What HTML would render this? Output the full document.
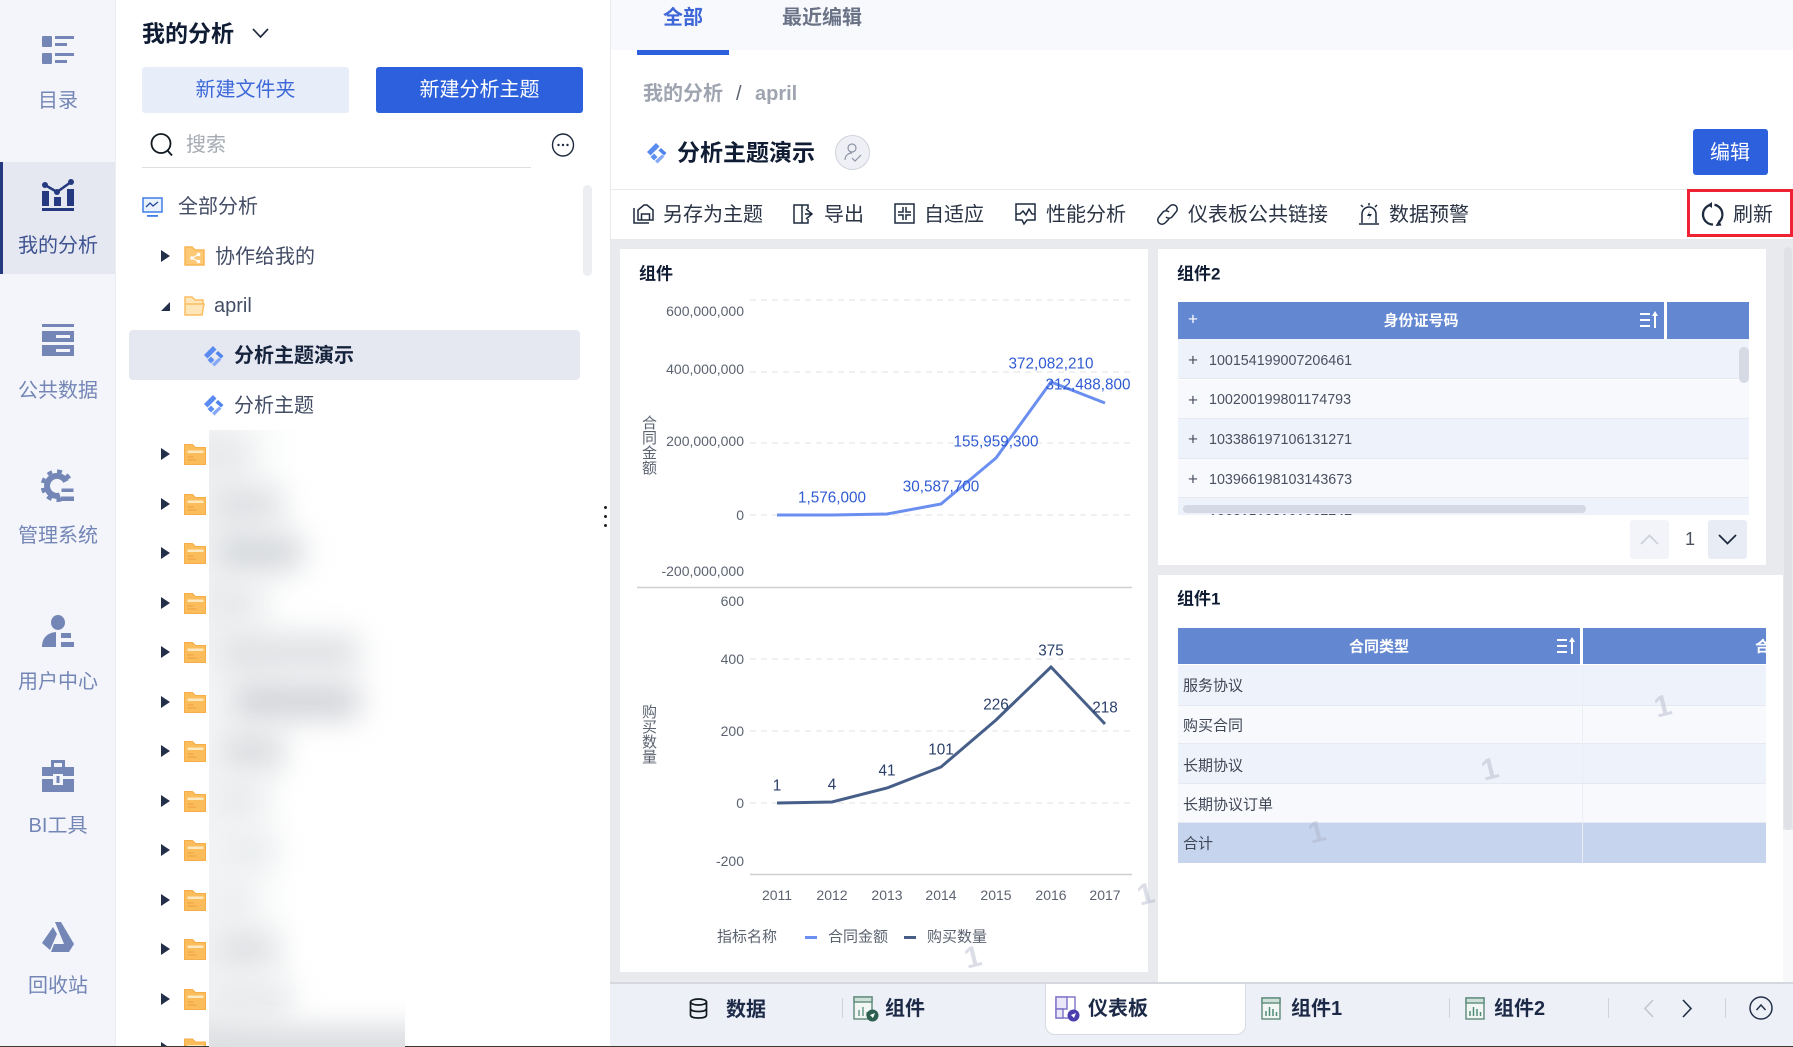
<!DOCTYPE html>
<html lang="zh-CN"><head><meta charset="utf-8"><title>我的分析</title>
<style>
*{box-sizing:border-box}
html,body{margin:0;padding:0;width:1793px;height:1047px;overflow:hidden;background:#fff}
body{position:relative;font-family:"Liberation Sans","Noto Sans CJK SC",sans-serif;color:#3a4560}
.a{position:absolute}
.t,.c,.r{position:absolute;white-space:nowrap;line-height:1}
.t{transform:translateY(calc(-50% + 1px))}
.c{transform:translate(-50%,calc(-50% + 1px))}
.r{transform:translate(-100%,-50%)}
.nav{font-size:20px;color:#7486b6;transform:translate(-50%,calc(-50% + 2px))}
.tree{font-size:20px;color:#434d66}
.tool{font-size:20px;color:#2a3344}
.ax{font-size:14px;color:#5c6370}
.c.ax,.c.b1,.c.b2{transform:translate(-50%,-50%)}
.t.cell{transform:translateY(-50%)}
.b1{font-size:15.3px;color:#2f5bd3}
.b2{font-size:15.3px;color:#2a3f6b}
.cell{font-size:14.3px;color:#4a5060}
.cn{font-size:15px;color:#3f4656}
.h{font-size:15px;font-weight:700;color:#fff}
.ttl{font-size:17px;font-weight:700;color:#0f1c33}
.bt{font-size:20px;font-weight:700;color:#1c2a48}
.wm{position:absolute;font-size:30px;font-weight:700;color:rgba(170,176,195,.42);transform:translate(-50%,-50%) rotate(-14deg);line-height:1}
.vert{position:absolute;writing-mode:vertical-rl;text-orientation:upright;font-size:15px;line-height:1;color:#5c6370;letter-spacing:0}
.bl{position:absolute;height:34px;filter:blur(15px)}
svg{position:absolute;overflow:visible}
</style></head><body>
<svg width="0" height="0"><defs>
<g id="fo"><path d="M0 0h8l3 3h10v17H0z" fill="#fbbd5c" stroke="#f6ae48"/><rect x="3" y="6" width="16" height="2.500" fill="#fee9bf"/><rect x="3" y="12" width="6" height="1" fill="#ec9f3a"/><rect x="3" y="15" width="9" height="1" fill="#ec9f3a"/></g>
<path id="ar" d="M0 0l9 6-9 6z" fill="#24304a"/>
<g id="dm"><path d="M1 10L10 1l3.500 3.500-9 9z" fill="#5a8bf0"/><path d="M15 6l5.500 5-2.500 2.500-5.500-5z" fill="#4f83ee"/><path d="M4.500 15L8 11.500l3.500 3.500L8 18.500z" fill="#5f90f1"/><path d="M11.500 21.500L9 19l7-6.500 2.500 2z" fill="#85a9f6"/></g>
</defs></svg>

<!-- Sidebar -->
<div class="a" style="left:0;top:0;width:116px;height:1047px;background:#f3f5fa;border-right:1px solid #eceef3"></div>
<div class="a" style="left:0;top:162px;width:115px;height:112px;background:#e5e8f1"></div>
<div class="a" style="left:0;top:162px;width:3px;height:112px;background:#24397f"></div>

<svg style="left:42px;top:36px" width="32" height="28" viewBox="0 0 32 28" fill="#7486b6"><rect x="0" y="0" width="10" height="11" rx="1"/><rect x="13" y="0" width="19" height="3"/><rect x="13" y="7" width="12" height="3"/><rect x="0" y="17" width="10" height="11" rx="1"/><rect x="13" y="17" width="19" height="3"/><rect x="13" y="24" width="12" height="3"/></svg>
<div class="c nav" style="left:58px;top:99px">目录</div>

<svg style="left:42px;top:179px" width="32" height="32" viewBox="0 0 32 32" fill="#24397f"><path d="M3 6l12 7L29 3" fill="none" stroke="#24397f" stroke-width="2.600"/><circle cx="3" cy="6" r="3"/><circle cx="15" cy="13" r="3"/><circle cx="29" cy="3" r="3"/><rect x="0" y="12" width="7" height="15"/><rect x="12" y="18" width="7" height="9"/><rect x="25" y="10" width="7" height="17"/><rect x="0" y="29" width="32" height="3"/></svg>
<div class="c nav" style="left:58px;top:244px;color:#3d5290">我的分析</div>

<svg style="left:42px;top:324px" width="32" height="32" viewBox="0 0 32 32" fill="#7486b6"><rect x="0" y="0" width="32" height="3"/><path d="M0 7h32v11H0zM14 11v3h14v-3z" fill-rule="evenodd"/><path d="M0 21h32v11H0zM14 25v3h14v-3z" fill-rule="evenodd"/></svg>
<div class="c nav" style="left:58px;top:389px">公共数据</div>

<svg style="left:42px;top:470px" width="32" height="32" viewBox="0 0 32 32" fill="none" stroke="#7486b6"><path d="M24 11.500A10 10 0 1 0 18 25.500" stroke-width="6"/><path d="M27.500 8.500A14.500 14.500 0 1 0 19.500 29.500" stroke-width="3.500" stroke-dasharray="5 5"/><rect x="19.500" y="18.500" width="12" height="3.500" fill="#7486b6" stroke="none"/><rect x="19" y="26.500" width="13" height="4.500" fill="#7486b6" stroke="none"/></svg>
<div class="c nav" style="left:58px;top:534px">管理系统</div>

<svg style="left:42px;top:615px" width="32" height="32" viewBox="0 0 32 32" fill="#7486b6"><ellipse cx="16" cy="7.500" rx="7" ry="7.500"/><path d="M0 32c0-8 4-14 14-15v15z"/><rect x="19" y="18" width="10" height="5"/><rect x="19" y="27" width="13" height="5"/></svg>
<div class="c nav" style="left:58px;top:680px">用户中心</div>

<svg style="left:42px;top:760px" width="32" height="32" viewBox="0 0 32 32" fill="#7486b6"><path d="M9 7V0h14v7h-3V3h-8v4z"/><rect x="0" y="7" width="32" height="9"/><rect x="0" y="19" width="32" height="13"/><rect x="11" y="14" width="10" height="11" fill="#f3f5fa"/><rect x="14.500" y="16" width="3" height="7"/></svg>
<div class="c nav" style="left:58px;top:824px">BI工具</div>

<svg style="left:42px;top:922px" width="32" height="30" viewBox="0 0 32 30" fill="#7486b6"><path d="M13 0h6l13 22H22z"/><path d="M11 5l4 7L8 28 0 21z"/><path d="M12 22h20l-5 8H9z"/></svg>
<div class="c nav" style="left:58px;top:984px">回收站</div>

<!-- Panel -->
<div class="t" style="left:142px;top:33px;font-size:23px;font-weight:700;color:#0f1c33">我的分析</div>
<svg style="left:252px;top:28px" width="17" height="11" viewBox="0 0 17 11"><path d="M1 1l7.500 8L16 1" fill="none" stroke="#222c40" stroke-width="1.700"/></svg>
<div class="a" style="left:142px;top:67px;width:207px;height:46px;background:#e8eef9;border-radius:3px"></div>
<div class="c" style="left:245.500px;top:89px;font-size:20px;color:#3e68d8">新建文件夹</div>
<div class="a" style="left:376px;top:67px;width:207px;height:46px;background:#2d60dc;border-radius:3px"></div>
<div class="c" style="left:479.500px;top:89px;font-size:20px;color:#fff">新建分析主题</div>

<svg style="left:150px;top:133px" width="24" height="24" viewBox="0 0 24 24" fill="none" stroke="#101820" stroke-width="1.800"><circle cx="11" cy="10.500" r="9.500"/><path d="M17.500 17.500l4.500 5"/></svg>
<div class="t" style="left:186px;top:144px;font-size:20px;color:#a6abb3">搜索</div>
<div class="a" style="left:142px;top:167px;width:389px;height:1px;background:#dcdee2"></div>
<svg style="left:551px;top:133px" width="24" height="24" viewBox="0 0 24 24"><ellipse cx="12" cy="12" rx="10.500" ry="11" fill="none" stroke="#1d2a3f" stroke-width="1.400"/><circle cx="7.500" cy="12" r="1.200" fill="#1d2a3f"/><circle cx="12" cy="12" r="1.200" fill="#1d2a3f"/><circle cx="16.500" cy="12" r="1.200" fill="#1d2a3f"/></svg>
<div class="a" style="left:583px;top:185px;width:9px;height:91px;background:#eceef2;border-radius:5px"></div>

<svg style="left:142px;top:197px" width="21" height="21" viewBox="0 0 21 21"><rect x="1" y="1" width="19" height="14" fill="#e9f1fd" stroke="#3f7ee8" stroke-width="1.500"/><path d="M4 10l4-4 3 3 5-4" fill="none" stroke="#26489a" stroke-width="1.300"/><rect x="5" y="18" width="11" height="1.800" fill="#3f7ee8"/></svg>
<div class="t tree" style="left:178px;top:206px">全部分析</div>

<svg style="left:161px;top:250px" width="9" height="12" viewBox="0 0 9 12"><path d="M0 0l9 6-9 6z" fill="#24304a"/></svg>
<svg style="left:184px;top:246px" width="21" height="20" viewBox="0 0 21 20"><path d="M1 1h7l3 3h9v15H1z" fill="#fcc976" stroke="#f9b654" stroke-width="1.500"/><circle cx="8" cy="12" r="1.800" fill="#fff"/><circle cx="14.500" cy="8.500" r="1.800" fill="#fff"/><circle cx="14.500" cy="15.500" r="1.800" fill="#fff"/><path d="M8 12l6.500-3.500M8 12l6.500 3.500" stroke="#fff"/></svg>
<div class="t tree" style="left:215px;top:256px">协作给我的</div>

<svg style="left:161px;top:302px" width="9" height="9" viewBox="0 0 9 9"><path d="M9 0v9H0z" fill="#24304a"/></svg>
<svg style="left:184px;top:296px" width="21" height="20" viewBox="0 0 21 20"><path d="M1 1h7l3 3h8v4H1zM1 8v11h17l2-11z" fill="#fee6b8" stroke="#fbbe62" stroke-width="1.500"/></svg>
<div class="t tree" style="left:214px;top:305px;font-size:20px">april</div>

<div class="a" style="left:129px;top:330px;width:451px;height:50px;background:#e5e8f1;border-radius:4px"></div>
<svg style="left:203px;top:345px" width="22" height="22" viewBox="0 0 22 22"><use href="#dm"/></svg>
<div class="t" style="left:234px;top:355px;font-size:20px;font-weight:700;color:#16233d">分析主题演示</div>
<svg style="left:203px;top:394px" width="22" height="22" viewBox="0 0 22 22"><use href="#dm"/></svg>
<div class="t tree" style="left:234px;top:405px">分析主题</div>

<!-- folder rows -->
<svg style="left:0;top:0" width="210" height="1047" viewBox="0 0 210 1047">
<use href="#ar" x="161" y="448"/><use href="#fo" x="184.500" y="444.500"/>
<use href="#ar" x="161" y="498"/><use href="#fo" x="184.500" y="494.500"/>
<use href="#ar" x="161" y="547"/><use href="#fo" x="184.500" y="543.500"/>
<use href="#ar" x="161" y="597"/><use href="#fo" x="184.500" y="593.500"/>
<use href="#ar" x="161" y="646"/><use href="#fo" x="184.500" y="642.500"/>
<use href="#ar" x="161" y="696"/><use href="#fo" x="184.500" y="692.500"/>
<use href="#ar" x="161" y="745"/><use href="#fo" x="184.500" y="741.500"/>
<use href="#ar" x="161" y="795"/><use href="#fo" x="184.500" y="791.500"/>
<use href="#ar" x="161" y="844"/><use href="#fo" x="184.500" y="840.500"/>
<use href="#ar" x="161" y="894"/><use href="#fo" x="184.500" y="890.500"/>
<use href="#ar" x="161" y="943"/><use href="#fo" x="184.500" y="939.500"/>
<use href="#ar" x="161" y="993"/><use href="#fo" x="184.500" y="989.500"/>
<use href="#ar" x="161" y="1042"/><use href="#fo" x="184.500" y="1039"/>
</svg>

<!-- blurred names -->
<div class="a" style="left:209px;top:430px;width:220px;height:617px;overflow:hidden;background:linear-gradient(90deg,#f4f5f6 0,#fafbfb 22%,#fff 42%)">
 <div class="bl" style="left:-10px;top:7px;width:50px;background:#e4e6e8"></div>
 <div class="bl" style="left:2px;top:57px;width:70px;background:#dcdee1"></div>
 <div class="bl" style="left:8px;top:105px;width:85px;background:#d2d5d9"></div>
 <div class="bl" style="left:-5px;top:155px;width:55px;background:#e4e6e8"></div>
 <div class="bl" style="left:10px;top:205px;width:140px;background:#dddfe2"></div>
 <div class="bl" style="left:25px;top:254px;width:125px;background:#cfd1d6"></div>
 <div class="bl" style="left:14px;top:304px;width:60px;background:#d8dadd"></div>
 <div class="bl" style="left:8px;top:353px;width:45px;background:#e6e8ea"></div>
 <div class="bl" style="left:14px;top:403px;width:50px;background:#e8eaec"></div>
 <div class="bl" style="left:8px;top:453px;width:35px;background:#e9ebed"></div>
 <div class="bl" style="left:8px;top:502px;width:60px;background:#dcdee1"></div>
 <div class="bl" style="left:3px;top:551px;width:80px;background:#e6e8ea"></div>
</div>
<div class="a" style="left:209px;top:985px;width:196px;height:62px;overflow:hidden">
 <div class="a" style="left:-30px;top:40px;width:260px;height:45px;background:#dcdee1;filter:blur(13px)"></div>
</div>

<div class="a" style="left:604px;top:506px;width:3px;height:3px;background:#222;border-radius:50%"></div>
<div class="a" style="left:604px;top:515px;width:3px;height:3px;background:#222;border-radius:50%"></div>
<div class="a" style="left:604px;top:524px;width:3px;height:3px;background:#222;border-radius:50%"></div>

<!-- Content header -->
<div class="a" style="left:610px;top:0;width:1183px;height:50px;background:#f8f9fd"></div>
<div class="a" style="left:610px;top:0;width:1px;height:240px;background:#e8eaee"></div>
<div class="a" style="left:637px;top:50px;width:92px;height:5px;background:#2d60dc"></div>
<div class="t" style="left:663px;top:17px;font-size:20px;font-weight:700;color:#3e68d8">全部</div>
<div class="t" style="left:782px;top:17px;font-size:20px;font-weight:700;color:#6a7386">最近编辑</div>
<div class="t" style="left:643px;top:93px;font-size:20px;font-weight:700;color:#9fa5b0">我的分析</div>
<div class="t" style="left:736px;top:93px;font-size:20px;color:#5c6470">/</div>
<div class="t" style="left:755px;top:93px;font-size:20px;font-weight:700;color:#9fa5b0">april</div>

<svg style="left:646px;top:142px" width="22" height="22" viewBox="0 0 22 22"><use href="#dm"/></svg>
<div class="t" style="left:677px;top:152px;font-size:23px;font-weight:700;color:#0f1c33">分析主题演示</div>
<svg style="left:835px;top:135px" width="35" height="35" viewBox="0 0 35 35"><circle cx="17.500" cy="17.500" r="17" fill="#eef0f5" stroke="#cfd3da"/><circle cx="17" cy="13" r="4" fill="none" stroke="#8d94a3" stroke-width="1.200"/><path d="M10 25c0-4 3-7 7-7M17 23l3 3 6-6" fill="none" stroke="#8d94a3" stroke-width="1.200"/></svg>

<div class="a" style="left:1693px;top:129px;width:75px;height:46px;background:#2d60dc;border-radius:3px"></div>
<div class="c" style="left:1730px;top:152px;font-size:20px;color:#fff">编辑</div>

<div class="a" style="left:610px;top:189px;width:1183px;height:1px;background:#e8eaee"></div>

<!-- Toolbar -->
<svg style="left:633px;top:203px" width="21" height="21" viewBox="0 0 21 21" fill="none" stroke="#1d2a3f" stroke-width="1.500"><path d="M1 5v15h15M5 17V7l6-5h3l6 5v10z"/><path d="M8.500 17v-6h8v6"/></svg>
<div class="t tool" style="left:663px;top:214px">另存为主题</div>
<svg style="left:793px;top:203px" width="21" height="21" viewBox="0 0 21 21" fill="none" stroke="#1d2a3f" stroke-width="1.500"><path d="M15 6V2H1v18h14v-4M9 2v18"/><path d="M13 6l6 5-6 5M12 11h7"/></svg>
<div class="t tool" style="left:824px;top:214px">导出</div>
<svg style="left:894px;top:203px" width="21" height="21" viewBox="0 0 21 21" fill="none" stroke="#1d2a3f" stroke-width="1.500"><rect x="1" y="1" width="19" height="19"/><path d="M9 4v5H4M12 4v5h5M9 17v-5H4M12 17v-5h5"/></svg>
<div class="t tool" style="left:924px;top:214px">自适应</div>
<svg style="left:1015px;top:203px" width="21" height="22" viewBox="0 0 21 22" fill="none" stroke="#1d2a3f" stroke-width="1.500"><path d="M1 1h19v16h-8l-3 4-2-4H1z"/><path d="M1 11h4l3-3 3 4 3-6 3 5h3"/></svg>
<div class="t tool" style="left:1046px;top:214px">性能分析</div>
<svg style="left:1157px;top:203px" width="21" height="22" viewBox="0 0 21 22" fill="none" stroke="#1d2a3f" stroke-width="1.500"><path d="M9 7l4-4a4.200 4.200 0 0 1 6 6l-4 5a4.200 4.200 0 0 1-6 0"/><path d="M12 9a4.200 4.200 0 0 0-6 0l-4 5a4.200 4.200 0 0 0 6 6l4-4"/></svg>
<div class="t tool" style="left:1188px;top:214px">仪表板公共链接</div>
<svg style="left:1359px;top:203px" width="20" height="22" viewBox="0 0 20 22" fill="none" stroke="#1d2a3f" stroke-width="1.500"><path d="M3 20V11a7 7 0 0 1 14 0v9M0 21h20M10 0v2.500M2 2l2 2M18 2l-2 2"/><path d="M11 8l-3 5h3l-2 4 4-6h-3z" fill="#1d2a3f" stroke="none"/></svg>
<div class="t tool" style="left:1389px;top:214px">数据预警</div>
<svg style="left:1701px;top:203px" width="23" height="23" viewBox="0 0 23 23" fill="none" stroke="#1d2a3f" stroke-width="2.300"><path d="M10 1.700A10 10 0 0 0 12 21.500"/><path d="M13.500 1.700A10 10 0 0 1 18 19"/><path d="M11 -1L6.500 2 11 5z" fill="#1d2a3f" stroke="none"/><path d="M14.500 23l6-0.500-2.500-5.500z" fill="#1d2a3f" stroke="none"/></svg>
<div class="t tool" style="left:1733px;top:214px">刷新</div>
<div class="a" style="left:1687px;top:189px;width:106px;height:48px;border:3px solid #ee2233"></div>

<!-- Gray work area -->
<div class="a" style="left:610px;top:239px;width:1183px;height:744px;background:#e8eaee"></div>
<div class="a" style="left:620px;top:249px;width:528px;height:723px;background:#fff"></div>
<div class="a" style="left:1158px;top:249px;width:608px;height:316px;background:#fff"></div>
<div class="a" style="left:1158px;top:575px;width:625px;height:408px;background:#fff"></div>
<div class="a" style="left:1783px;top:830px;width:10px;height:153px;background:#f8f8fa"></div>
<div class="a" style="left:1784px;top:247px;width:8px;height:583px;background:#dfe1e6;border-radius:4px"></div>

<!-- Chart svg lines -->
<svg style="left:0;top:0" width="1793" height="1047" viewBox="0 0 1793 1047" fill="none">
 <g stroke="#e8e8e8" stroke-width="1.200" stroke-dasharray="6 5">
  <path d="M750 300H1132M750 372H1132M750 443H1132M750 515H1132M750 659H1132M750 731H1132M750 803H1132"/>
 </g>
 <path d="M637 587.500H1132M750 874.500H1132" stroke="#cfcfcf" stroke-width="1.500"/>
 <path d="M777 515L832 515 887 514 941 504 996 458 1051 382 1105 403" stroke="#6b8ff0" stroke-width="3"/>
 <path d="M777 803L832 802 887 788 941 767 996 720 1051 667 1105 724" stroke="#475f88" stroke-width="3"/>
</svg>

<div class="t ttl" style="left:639px;top:273px">组件</div>
<div class="r ax" style="left:744px;top:311px">600,000,000</div>
<div class="r ax" style="left:744px;top:369px">400,000,000</div>
<div class="r ax" style="left:744px;top:441px">200,000,000</div>
<div class="r ax" style="left:744px;top:515px">0</div>
<div class="r ax" style="left:744px;top:571px">-200,000,000</div>
<div class="vert" style="left:641px;top:415px">合同金额</div>
<div class="c b1" style="left:832px;top:498px">1,576,000</div>
<div class="c b1" style="left:941px;top:487px">30,587,700</div>
<div class="c b1" style="left:996px;top:442px">155,959,300</div>
<div class="c b1" style="left:1051px;top:364px">372,082,210</div>
<div class="c b1" style="left:1088px;top:385px">312,488,800</div>

<div class="r ax" style="left:744px;top:601px">600</div>
<div class="r ax" style="left:744px;top:659px">400</div>
<div class="r ax" style="left:744px;top:731px">200</div>
<div class="r ax" style="left:744px;top:803px">0</div>
<div class="r ax" style="left:744px;top:861px">-200</div>
<div class="vert" style="left:641px;top:704px">购买数量</div>
<div class="c b2" style="left:777px;top:786px">1</div>
<div class="c b2" style="left:832px;top:785px">4</div>
<div class="c b2" style="left:887px;top:771px">41</div>
<div class="c b2" style="left:941px;top:750px">101</div>
<div class="c b2" style="left:996px;top:705px">226</div>
<div class="c b2" style="left:1051px;top:651px">375</div>
<div class="c b2" style="left:1105px;top:708px">218</div>
<div class="c ax" style="left:777px;top:895px">2011</div>
<div class="c ax" style="left:832px;top:895px">2012</div>
<div class="c ax" style="left:887px;top:895px">2013</div>
<div class="c ax" style="left:941px;top:895px">2014</div>
<div class="c ax" style="left:996px;top:895px">2015</div>
<div class="c ax" style="left:1051px;top:895px">2016</div>
<div class="c ax" style="left:1105px;top:895px">2017</div>
<div class="t" style="left:717px;top:936px;font-size:15px;color:#5c6370">指标名称</div>
<div class="a" style="left:805px;top:936px;width:12px;height:2.500px;background:#6b8ff0"></div>
<div class="t" style="left:828px;top:936px;font-size:15px;color:#5c6370">合同金额</div>
<div class="a" style="left:904px;top:936px;width:12px;height:2.500px;background:#475f88"></div>
<div class="t" style="left:927px;top:936px;font-size:15px;color:#5c6370">购买数量</div>

<!-- Table 组件2 -->
<div class="t ttl" style="left:1177px;top:273px">组件2</div>
<div class="a" style="left:1178px;top:302px;width:571px;height:37px;background:#6487d1"></div>
<div class="a" style="left:1664px;top:302px;width:3px;height:37px;background:#fff"></div>
<div class="c" style="left:1193px;top:318px;font-size:17px;color:#fff">+</div>
<div class="c h" style="left:1421px;top:320px">身份证号码</div>
<svg style="left:1640px;top:311px" width="18" height="17" viewBox="0 0 18 17" fill="#fff"><rect x="0" y="2" width="10" height="2"/><rect x="0" y="8" width="10" height="2"/><rect x="0" y="14" width="10" height="2"/><path d="M15 0l3 5h-2v12h-2V5h-2z"/></svg>
<div class="a" style="left:1178px;top:339px;width:571px;height:176px;overflow:hidden;background:#fff">
 <div class="a" style="left:0;top:0;width:571px;height:40px;background:#eef2fa;border-bottom:1px solid #e6e9f1"></div>
 <div class="a" style="left:0;top:41px;width:571px;height:39px;background:#f8f9fd;border-bottom:1px solid #e6e9f1"></div>
 <div class="a" style="left:0;top:80px;width:571px;height:40px;background:#eef2fa;border-bottom:1px solid #e6e9f1"></div>
 <div class="a" style="left:0;top:120px;width:571px;height:39px;background:#f8f9fd;border-bottom:1px solid #e6e9f1"></div>
 <div class="a" style="left:0;top:159px;width:571px;height:17px;background:#eef2fa"></div>
 <div class="t cell" style="left:31px;top:181px">106215198101067747</div>
 <div class="a" style="left:5px;top:166px;width:403px;height:8px;background:#d5d9e5;border-radius:4px"></div>
 <div class="a" style="left:561px;top:8px;width:10px;height:36px;background:#d5dae5;border-radius:5px"></div>
</div>
<div class="c cell" style="left:1193px;top:359px;font-size:17px">+</div>
<div class="c cell" style="left:1193px;top:399px;font-size:17px">+</div>
<div class="c cell" style="left:1193px;top:438px;font-size:17px">+</div>
<div class="c cell" style="left:1193px;top:478px;font-size:17px">+</div>
<div class="t cell" style="left:1209px;top:361px">100154199007206461</div>
<div class="t cell" style="left:1209px;top:400px">100200199801174793</div>
<div class="t cell" style="left:1209px;top:440px">103386197106131271</div>
<div class="t cell" style="left:1209px;top:480px">103966198103143673</div>

<div class="a" style="left:1630px;top:520px;width:39px;height:39px;background:#f2f4f9;border-radius:3px"></div>
<svg style="left:1640px;top:534px" width="19" height="11" viewBox="0 0 19 11"><path d="M1 10l8.500-8.500L18 10" fill="none" stroke="#cdd0d6" stroke-width="1.800"/></svg>
<div class="c" style="left:1690px;top:538px;font-size:18px;color:#4a5060">1</div>
<div class="a" style="left:1708px;top:520px;width:39px;height:39px;background:#e8ecf5;border-radius:3px"></div>
<svg style="left:1718px;top:534px" width="19" height="11" viewBox="0 0 19 11"><path d="M1 1l8.500 8.500L18 1" fill="none" stroke="#1d2a3f" stroke-width="1.800"/></svg>

<!-- Table 组件1 -->
<div class="t ttl" style="left:1177px;top:598px">组件1</div>
<div class="a" style="left:1178px;top:628px;width:588px;height:236px;overflow:hidden">
 <div class="a" style="left:0;top:0;width:588px;height:36px;background:#6487d1"></div>
 <div class="a" style="left:402px;top:0;width:3px;height:37px;background:#fff"></div>
 <div class="a" style="left:0;top:37px;width:588px;height:41px;background:#eef2fa;border-bottom:1px solid #e6e9f1"></div>
 <div class="a" style="left:0;top:78px;width:588px;height:38px;background:#f8f9fd;border-bottom:1px solid #e6e9f1"></div>
 <div class="a" style="left:0;top:116px;width:588px;height:40px;background:#eef2fa;border-bottom:1px solid #e6e9f1"></div>
 <div class="a" style="left:0;top:156px;width:588px;height:39px;background:#f8f9fd;border-bottom:1px solid #e6e9f1"></div>
 <div class="a" style="left:0;top:195px;width:588px;height:40px;background:#c7d4ee"></div>
 <div class="a" style="left:403.500px;top:37px;width:1.500px;height:198px;background:#eaedf4"></div>
 <div class="t h" style="left:577px;top:18px">合同金额</div>
</div>
<div class="c h" style="left:1379px;top:646px">合同类型</div>
<svg style="left:1557px;top:637px" width="18" height="17" viewBox="0 0 18 17" fill="#fff"><rect x="0" y="2" width="10" height="2"/><rect x="0" y="8" width="10" height="2"/><rect x="0" y="14" width="10" height="2"/><path d="M15 0l3 5h-2v12h-2V5h-2z"/></svg>
<div class="t cn" style="left:1183px;top:685px">服务协议</div>
<div class="t cn" style="left:1183px;top:725px">购买合同</div>
<div class="t cn" style="left:1183px;top:765px">长期协议</div>
<div class="t cn" style="left:1183px;top:804px">长期协议订单</div>
<div class="t cn" style="left:1183px;top:843px">合计</div>

<div class="wm" style="left:1146px;top:895px">1</div>
<div class="wm" style="left:973px;top:958px">1</div>
<div class="wm" style="left:1663px;top:707px">1</div>
<div class="wm" style="left:1490px;top:770px">1</div>
<div class="wm" style="left:1317px;top:833px">1</div>

<!-- Bottom bar -->
<div class="a" style="left:610px;top:982px;width:1183px;height:65px;background:#edf0f6;border-top:2px solid #d5d8de"></div>
<div class="a" style="left:1045px;top:983px;width:201px;height:52px;background:#fff;border:1px solid #d8dbe3;border-top:1px solid #d5d8de;border-radius:0 0 10px 10px"></div>

<svg style="left:689px;top:998px" width="19" height="21" viewBox="0 0 19 21" fill="none" stroke="#101820" stroke-width="1.700"><ellipse cx="9.500" cy="4" rx="8" ry="3"/><path d="M1.500 4v13c0 2 3.500 3 8 3s8-1 8-3V4M1.500 10.500c0 2 3.500 3 8 3s8-1 8-3"/></svg>
<div class="t bt" style="left:726px;top:1009px">数据</div>
<div class="a" style="left:842px;top:998px;width:1px;height:20px;background:#d0d3da"></div>
<svg style="left:853px;top:996px" width="26" height="26" viewBox="0 0 26 26"><rect x="1" y="1" width="18" height="22" fill="#f3f7f4" stroke="#5d8a7c" stroke-width="1.400"/><rect x="1" y="1" width="18" height="5" fill="#cfe0da" stroke="#5d8a7c" stroke-width="1.400"/><path d="M6 20v-6M10 20v-9M14 20v-4" stroke="#6a9a8c" stroke-width="1.500"/><circle cx="19.500" cy="19.500" r="6" fill="#2d5f50"/><path d="M17 19l5-2-2 5z" fill="#fff"/></svg>
<div class="t bt" style="left:885px;top:1008px">组件</div>
<svg style="left:1055px;top:996px" width="25" height="26" viewBox="0 0 25 26"><rect x="1" y="1" width="19" height="21" fill="#fff" stroke="#7a70c8" stroke-width="1.400"/><rect x="1" y="1" width="11" height="12" fill="#e9e7f8" stroke="#7a70c8" stroke-width="1.400"/><rect x="1" y="13" width="7" height="9" fill="#e9e7f8" stroke="#7a70c8" stroke-width="1.400"/><circle cx="18.500" cy="19.500" r="6" fill="#4b3fb0"/><path d="M16 19l5-2-2 5z" fill="#fff"/></svg>
<div class="t bt" style="left:1088px;top:1008px">仪表板</div>
<svg style="left:1261px;top:997px" width="20" height="23" viewBox="0 0 20 23"><rect x="1" y="1" width="18" height="21" fill="#f3f7f4" stroke="#5d8a7c" stroke-width="1.400"/><rect x="1" y="1" width="18" height="5" fill="#cfe0da" stroke="#5d8a7c" stroke-width="1.400"/><path d="M5 19v-5M8.500 19v-9M12 19v-7M15.500 19v-4" stroke="#4f8b7a" stroke-width="1.500"/></svg>
<div class="t bt" style="left:1291px;top:1008px">组件1</div>
<div class="a" style="left:1449px;top:998px;width:1px;height:20px;background:#d0d3da"></div>
<svg style="left:1465px;top:997px" width="20" height="23" viewBox="0 0 20 23"><rect x="1" y="1" width="18" height="21" fill="#f3f7f4" stroke="#5d8a7c" stroke-width="1.400"/><rect x="1" y="1" width="18" height="5" fill="#cfe0da" stroke="#5d8a7c" stroke-width="1.400"/><path d="M5 19v-5M8.500 19v-9M12 19v-7M15.500 19v-4" stroke="#4f8b7a" stroke-width="1.500"/></svg>
<div class="t bt" style="left:1494px;top:1008px">组件2</div>
<div class="a" style="left:1608px;top:998px;width:1px;height:20px;background:#d0d3da"></div>
<svg style="left:1643px;top:999px" width="11" height="19" viewBox="0 0 11 19"><path d="M10 1L2 9.500 10 18" fill="none" stroke="#c3c7cf" stroke-width="1.600"/></svg>
<svg style="left:1682px;top:999px" width="11" height="19" viewBox="0 0 11 19"><path d="M1 1l8 8.500L1 18" fill="none" stroke="#24304a" stroke-width="1.600"/></svg>
<div class="a" style="left:1725px;top:998px;width:1px;height:20px;background:#d0d3da"></div>
<svg style="left:1749px;top:996px" width="24" height="24" viewBox="0 0 24 24"><circle cx="12" cy="12" r="11" fill="none" stroke="#24304a" stroke-width="1.500"/><path d="M7.500 14l4.500-5 4.500 5" fill="none" stroke="#24304a" stroke-width="1.500"/></svg>

<!-- window edge -->
<div class="a" style="left:0;top:1045.500px;width:209px;height:1.500px;background:#3c3a30"></div>
<div class="a" style="left:405px;top:1045.500px;width:1388px;height:1.500px;background:#3c3a30"></div>
</body></html>
